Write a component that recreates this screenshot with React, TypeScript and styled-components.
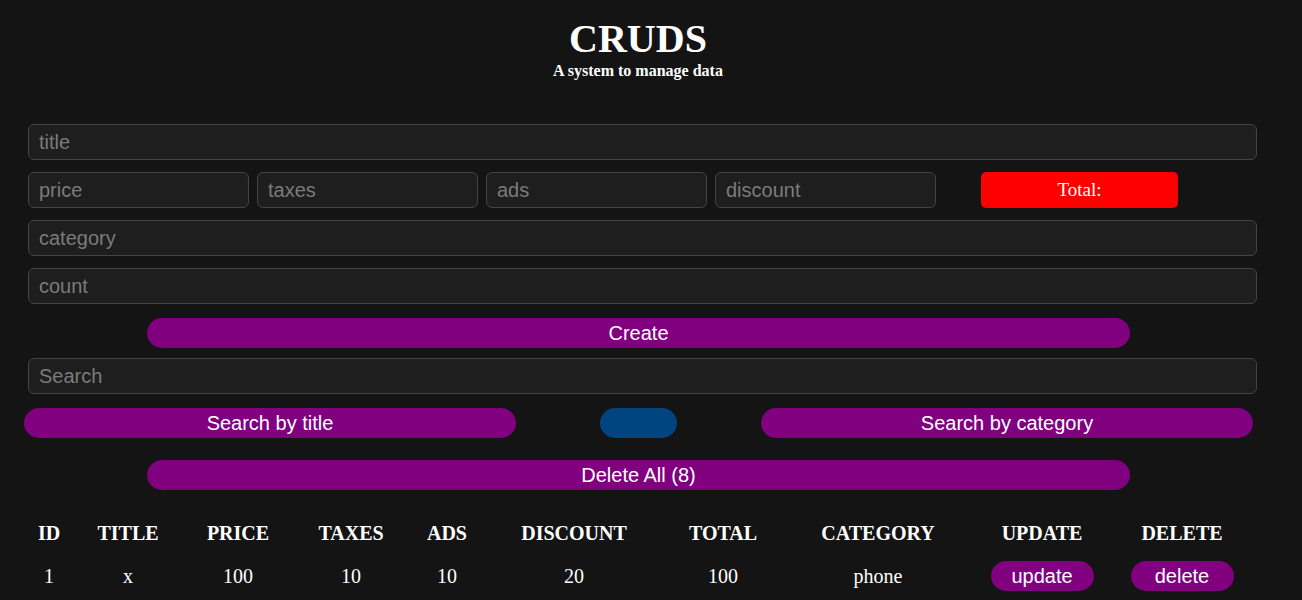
import React from 'react';
import styled, { createGlobalStyle } from 'styled-components';

const GlobalStyle = createGlobalStyle`
  * { box-sizing: border-box; }
  html, body { margin: 0; padding: 0; }
  body {
    background: #141414;
    color: #fff;
    font-family: 'Liberation Serif', 'Times New Roman', serif;
  }
`;

const Page = styled.div`
  width: 1229px;
  margin-left: 24px;
  padding-top: 16px;
`;

const Head = styled.header`
  text-align: center;
  margin-bottom: 44px;
  padding-right: 1px;
`;

const Title = styled.h1`
  margin: 0;
  font-size: 40px;
  line-height: 46px;
  font-weight: 700;
`;

const Subtitle = styled.p`
  margin: 0;
  font-size: 16px;
  line-height: 18px;
  font-weight: 700;
`;

const Form = styled.div`
  display: flex;
  flex-direction: column;
  gap: 12px;
  margin-left: 4px;
  width: 1229px;
`;

const Input = styled.input<{ $w?: number }>`
  width: ${p => (p.$w ? `${p.$w}px` : '100%')};
  height: 36px;
  padding: 0 10px;
  background: #1e1e1e;
  border: 1px solid #444;
  border-radius: 6px;
  color: #fff;
  font-family: 'Liberation Sans', Arial, sans-serif;
  font-size: 20px;
  outline: none;

  &::placeholder { color: #7b7b7b; }
`;

const PriceRow = styled.div`
  display: flex;
  align-items: center;
  gap: 8px;
`;

const Total = styled.div`
  width: 197px;
  height: 36px;
  margin-left: 37px;
  background: #ff0000;
  border-radius: 5px;
  display: flex;
  align-items: center;
  justify-content: center;
  font-size: 19px;
`;

const Pill = styled.button<{ $w: number; $blue?: boolean }>`
  width: ${p => p.$w}px;
  height: 30px;
  border: none;
  border-radius: 15px;
  background: ${p => (p.$blue ? '#004480' : '#800080')};
  color: #fff;
  font-family: 'Liberation Sans', Arial, sans-serif;
  font-size: 20px;
  padding: 0;
  cursor: pointer;
`;

const Centered = styled.div<{ $top: number }>`
  display: flex;
  justify-content: center;
  margin-top: ${p => p.$top}px;
`;

const SearchWrap = styled.div`
  margin-top: 10px;
  margin-left: 4px;
  width: 1229px;
`;

const SearchRow = styled.div`
  display: flex;
  justify-content: space-between;
  align-items: center;
  margin-top: 14px;
`;

const Table = styled.table`
  margin-top: 23px;
  margin-left: -14px;
  border-collapse: collapse;
  table-layout: fixed;
  width: 1228px;
  text-align: center;
`;

const Col = styled.col<{ $w: number }>`
  width: ${p => p.$w}px;
`;

const Th = styled.th`
  height: 40px;
  font-size: 20px;
  font-weight: 700;
  text-transform: uppercase;
  padding: 0;
`;

const Td = styled.td`
  height: 46px;
  font-size: 20px;
  padding: 0;
`;

const columns: [string, number][] = [
  ['id', 78], ['title', 80], ['price', 140], ['taxes', 86], ['ads', 106],
  ['discount', 148], ['total', 150], ['category', 160], ['update', 168], ['delete', 112],
];

const products = [
  { id: 1, title: 'x', price: 100, taxes: 10, ads: 10, discount: 20, total: 100, category: 'phone' },
];

export default function App() {
  return (
    <>
      <GlobalStyle />
      <Page>
        <Head>
          <Title>CRUDS</Title>
          <Subtitle>A system to manage data</Subtitle>
        </Head>

        <Form>
          <Input placeholder="title" />
          <PriceRow>
            <Input $w={221} placeholder="price" />
            <Input $w={221} placeholder="taxes" />
            <Input $w={221} placeholder="ads" />
            <Input $w={221} placeholder="discount" />
            <Total>Total:</Total>
          </PriceRow>
          <Input placeholder="category" />
          <Input placeholder="count" />
        </Form>

        <Centered $top={14}>
          <Pill $w={983}>Create</Pill>
        </Centered>

        <SearchWrap>
          <Input placeholder="Search" />
        </SearchWrap>

        <SearchRow>
          <Pill $w={492}>Search by title</Pill>
          <Pill $w={77} $blue />
          <Pill $w={492}>Search by category</Pill>
        </SearchRow>

        <Centered $top={22}>
          <Pill $w={983}>Delete All (8)</Pill>
        </Centered>

        <Table>
          <colgroup>
            {columns.map(([name, w]) => <Col key={name} $w={w} />)}
          </colgroup>
          <thead>
            <tr>
              {columns.map(([name]) => <Th key={name}>{name}</Th>)}
            </tr>
          </thead>
          <tbody>
            {products.map(p => (
              <tr key={p.id}>
                <Td>{p.id}</Td>
                <Td>{p.title}</Td>
                <Td>{p.price}</Td>
                <Td>{p.taxes}</Td>
                <Td>{p.ads}</Td>
                <Td>{p.discount}</Td>
                <Td>{p.total}</Td>
                <Td>{p.category}</Td>
                <Td><Pill $w={103}>update</Pill></Td>
                <Td><Pill $w={103}>delete</Pill></Td>
              </tr>
            ))}
          </tbody>
        </Table>
      </Page>
    </>
  );
}
